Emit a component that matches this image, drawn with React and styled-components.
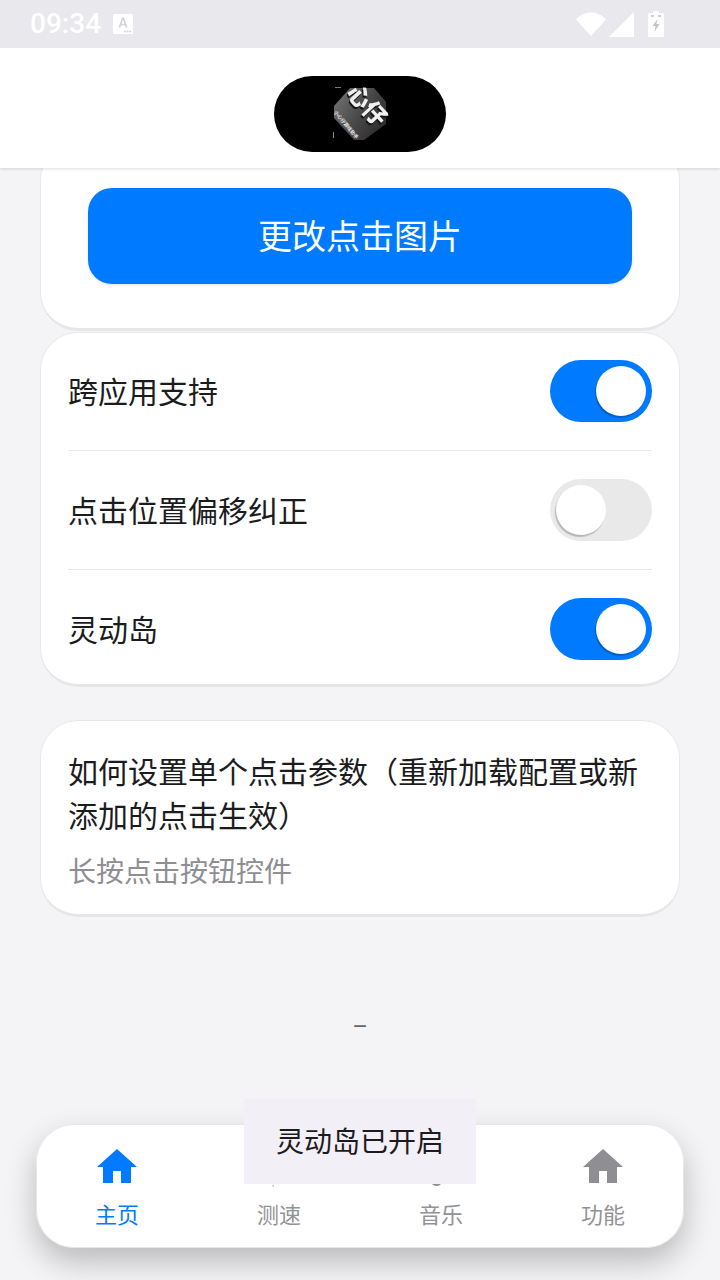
import React from "react";
import styled, { createGlobalStyle } from "styled-components";

const GlobalStyle = createGlobalStyle`
  html, body {
    margin: 0;
    padding: 0;
    background: #f4f4f6;
  }
  * {
    box-sizing: border-box;
  }
`;

const Page = styled.div`
  position: relative;
  width: 720px;
  height: 1280px;
  overflow: hidden;
  display: flex;
  flex-direction: column;
  background: #f4f4f6;
  color: #1c1c1e;
  font-family: "Noto Sans CJK SC", "Noto Sans", sans-serif;
`;

const StatusBar = styled.div`
  height: 48px;
  flex: none;
  display: flex;
  align-items: center;
  justify-content: space-between;
  padding: 0 56px 0 30px;
  background: #e8e8ed;
  color: #fff;
  position: relative;
  z-index: 3;
`;

const StatusLeft = styled.div`
  display: flex;
  align-items: center;
  gap: 12px;
`;

const Clock = styled.span`
  font-family: Roboto, sans-serif;
  font-size: 28px;
  font-weight: 500;
  line-height: 48px;
`;

const StatusRight = styled.div`
  display: flex;
  align-items: center;
`;

const Header = styled.div`
  height: 120px;
  flex: none;
  display: flex;
  align-items: center;
  justify-content: center;
  padding-top: 12px;
  background: #fff;
  box-shadow: 0 1px 3px rgba(0, 0, 0, 0.14);
  position: relative;
  z-index: 2;
`;

const Island = styled.div`
  width: 172px;
  height: 76px;
  border-radius: 38px;
  background: #000;
  display: flex;
  align-items: center;
  justify-content: center;
`;

const LogoText = styled.g`
  filter: drop-shadow(-1px 2px 0 #141414);
`;

const Main = styled.div`
  flex: 1;
  display: flex;
  flex-direction: column;
  padding: 0 40px;
`;

const Card = styled.div`
  background: #fff;
  border: 1px solid #e8e8eb;
  border-bottom: 3px solid #e6e6e9;
  border-radius: 38px;
`;

const ButtonCard = styled(Card)`
  margin-top: -26px;
  padding: 45px 47px 44px;
`;

const PrimaryButton = styled.div`
  height: 96px;
  padding-bottom: 4px;
  border-radius: 24px;
  background: #007aff;
  color: #fff;
  font-size: 34px;
  display: flex;
  align-items: center;
  justify-content: center;
  box-shadow: 0 1px 3px rgba(0, 0, 0, 0.12);
`;

const SwitchCard = styled(Card)`
  margin-top: 1px;
  padding: 0 27px;
`;

const Row = styled.div`
  display: flex;
  align-items: center;
  justify-content: space-between;
  padding: ${(p) => (p.$first ? "27px" : "28px")} 0 ${(p) => (p.$last ? "24px" : "28px")};
  border-bottom: ${(p) => (p.$last ? "none" : "1px solid #e8e8ea")};
`;

const RowLabel = styled.span`
  margin-top: -2px;
  font-size: 30px;
  line-height: 40px;
`;

const Track = styled.div`
  width: 102px;
  height: 62px;
  border-radius: 31px;
  padding: 6px;
  display: flex;
  justify-content: ${(p) => (p.$on ? "flex-end" : "flex-start")};
  background: ${(p) => (p.$on ? "#007aff" : "#e9e9ea")};
`;

const Thumb = styled.div`
  width: 50px;
  height: 50px;
  border-radius: 50%;
  background: #fff;
  box-shadow: -1px 2px 1px rgba(0, 0, 0, 0.22);
`;

const InfoCard = styled(Card)`
  margin-top: 33px;
  padding: 27px 27px 24px;
`;

const InfoTitle = styled.div`
  font-size: 30px;
  line-height: 44px;
`;

const InfoHint = styled.div`
  margin-top: 14px;
  font-size: 28px;
  line-height: 40px;
  color: #8e8e93;
`;

const Dash = styled.div`
  margin-top: 94px;
  text-align: center;
  font-family: Roboto, sans-serif;
  font-size: 24px;
  line-height: 32px;
  color: #666;
`;

const TabBar = styled.div`
  position: absolute;
  left: 36px;
  top: 1124px;
  width: 648px;
  height: 124px;
  display: grid;
  grid-template-columns: repeat(4, 1fr);
  background: #fff;
  border-radius: 38px;
  box-shadow: inset 0 0 0 1px #e6e6ea, 0 14px 30px rgba(0, 0, 0, 0.24);
`;

const Tab = styled.div`
  display: flex;
  flex-direction: column;
  align-items: center;
  padding-top: 25px;
  color: ${(p) => (p.$active ? "#007aff" : "#8e8e93")};
`;

const IconSlot = styled.div`
  height: 34px;
  line-height: 0;
`;

const TabLabel = styled.span`
  margin-top: 13px;
  font-size: 22px;
  line-height: 34px;
  color: ${(p) => (p.$active ? "#007aff" : "#929297")};
`;

const Toast = styled.div`
  position: absolute;
  left: 244px;
  top: 1098px;
  width: 232px;
  height: 86px;
  padding-bottom: 3px;
  display: flex;
  align-items: center;
  justify-content: center;
  background: #f3eff7;
  color: #1d1b20;
  font-size: 28px;
`;

const HomeIcon = () => (
  <svg width="40" height="34" viewBox="2 3 20 17" fill="currentColor">
    <path d="M10 20v-6h4v6h5v-8h3L12 3 2 12h3v8z" />
  </svg>
);

const GaugeIcon = () => (
  <svg width="40" height="38" viewBox="0 0 40 38" fill="currentColor">
    <path d="M4 30a16 16 0 1 1 32 0h-4a12 12 0 1 0-24 0z" />
    <path d="M14 26l12-12-6 16z" />
    <path d="M13.500 36h1.200l-.6 2.500z" />
  </svg>
);

const MusicIcon = () => (
  <svg width="40" height="38" viewBox="0 0 40 38" fill="currentColor">
    <path d="M18 2h14v6H22v22c0 3.500-3 7-6 7 -4 0-7-3-7-6.500S12 24 16 24c.7 0 1.400.1 2 .3z" />
  </svg>
);

const AppBadgeIcon = () => (
  <svg width="20" height="20" viewBox="0 0 20 20">
    <rect width="20" height="20" rx="1.5" fill="#fff" />
    <path d="M5.500 13.500 9 3.500h2l3.500 10h-1.900l-.7-2.200H8.100l-.7 2.200zM8.600 9.700h2.800L10 5.500z" fill="#d2d2d8" />
    <circle cx="12" cy="17.500" r="1" fill="#d2d2d8" />
    <circle cx="14.600" cy="17.500" r="1" fill="#d2d2d8" />
    <circle cx="17.200" cy="17.500" r="1" fill="#d2d2d8" />
  </svg>
);

const WifiIcon = () => (
  <svg width="30" height="24" viewBox="0 0 30 24" style={{ marginRight: 3 }}>
    <path d="M0 7.500C4 2.800 9 .5 15 .5s11 2.300 15 7L15 24z" fill="#fff" />
  </svg>
);

const SignalIcon = () => (
  <svg width="25" height="25" viewBox="0 0 25 25" style={{ marginRight: 14 }}>
    <path d="M25 0v25H0z" fill="#fff" />
  </svg>
);

const BatteryIcon = () => (
  <svg width="16" height="26" viewBox="0 0 16 26">
    <path d="M1.500 2H5V0h6v2h3.500A1.500 1.500 0 0 1 16 3.500v21a1.500 1.500 0 0 1-1.500 1.500h-13A1.500 1.500 0 0 1 0 24.500v-21A1.500 1.500 0 0 1 1.500 2z" fill="#fff" />
    <path d="M9.500 8 4.500 15h3l-1 6 5-8h-3z" fill="#c4c4cb" />
    <rect x="3" y="4" width="3" height="2" fill="#d2d2d8" />
    <rect x="10" y="4" width="3" height="2" fill="#d2d2d8" />
  </svg>
);

// Island logo: the dark rotated badge with its lettering
const BadgeLogo = () => (
  <svg width="76" height="76" viewBox="-8 -8 76 76">
    <defs>
      <linearGradient id="badge" x1="0" y1="0.2" x2="1" y2="0.8">
        <stop offset="0" stopColor="#707070" />
        <stop offset="0.5" stopColor="#484848" />
        <stop offset="1" stopColor="#2a2a2a" />
      </linearGradient>
    </defs>
    <path d="M20 4h24l12 14v22L34 56H24L4 34V22z" fill="url(#badge)" />
    <LogoText fill="#f0f0f0" fontFamily="Noto Sans CJK SC, sans-serif">
      <text transform="translate(15.300 10) rotate(47)" fontSize="23" fontWeight="900">心仔</text>
    </LogoText>
    <text transform="translate(3.500 28.500) rotate(50)" fill="#e8e8e8" fontSize="5" fontWeight="700" fontFamily="Noto Sans CJK SC, sans-serif">小心仔游戏助手</text>
    <rect x="3" y="48" width="1" height="6" fill="#888" />
    <rect x="5" y="3" width="6" height="1" fill="#777" />
  </svg>
);

const App = () => {
  return (
    <Page>
      <GlobalStyle />
      <StatusBar>
        <StatusLeft>
          <Clock>09:34</Clock>
          <AppBadgeIcon />
        </StatusLeft>
        <StatusRight>
          <WifiIcon />
          <SignalIcon />
          <BatteryIcon />
        </StatusRight>
      </StatusBar>
      <Header>
        <Island>
          <BadgeLogo />
        </Island>
      </Header>
      <Main>
        <ButtonCard>
          <PrimaryButton>更改点击图片</PrimaryButton>
        </ButtonCard>
        <SwitchCard>
          <Row $first>
            <RowLabel>跨应用支持</RowLabel>
            <Track $on>
              <Thumb />
            </Track>
          </Row>
          <Row>
            <RowLabel>点击位置偏移纠正</RowLabel>
            <Track>
              <Thumb />
            </Track>
          </Row>
          <Row $last>
            <RowLabel>灵动岛</RowLabel>
            <Track $on>
              <Thumb />
            </Track>
          </Row>
        </SwitchCard>
        <InfoCard>
          <InfoTitle>如何设置单个点击参数（重新加载配置或新添加的点击生效）</InfoTitle>
          <InfoHint>长按点击按钮控件</InfoHint>
        </InfoCard>
        <Dash>–</Dash>
      </Main>
      <TabBar>
        <Tab $active>
          <IconSlot>
            <HomeIcon />
          </IconSlot>
          <TabLabel $active>主页</TabLabel>
        </Tab>
        <Tab>
          <IconSlot>
            <GaugeIcon />
          </IconSlot>
          <TabLabel>测速</TabLabel>
        </Tab>
        <Tab>
          <IconSlot>
            <MusicIcon />
          </IconSlot>
          <TabLabel>音乐</TabLabel>
        </Tab>
        <Tab>
          <IconSlot>
            <HomeIcon />
          </IconSlot>
          <TabLabel>功能</TabLabel>
        </Tab>
      </TabBar>
      <Toast>灵动岛已开启</Toast>
    </Page>
  );
};

export default App;
